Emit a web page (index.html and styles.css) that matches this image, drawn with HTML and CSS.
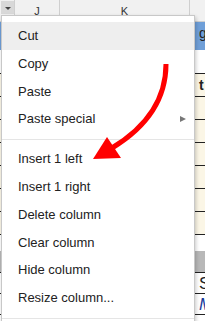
FILE: index.html
```html
<!DOCTYPE html>
<html>
<head>
<meta charset="utf-8">
<link rel="stylesheet" href="styles.css">
</head>
<body>
<div class="page">
  <div class="sheet">
    <div class="header">
      <div class="hc c0"><span class="dd"><span class="tri"></span></span></div>
      <div class="hc c1">J</div>
      <div class="hc c2">K</div>
      <div class="hc c3"></div>
    </div>
    <div class="row blue"><div class="lcell">g</div></div>
    <div class="row plain"></div>
    <div class="row lined"><div class="lcell bold">t</div></div>
    <div class="row lined"></div>
    <div class="row lined"></div>
    <div class="row lined"></div>
    <div class="row lined"></div>
    <div class="row lined"></div>
    <div class="row lined"></div>
    <div class="row short"></div>
    <div class="row gray"></div>
    <div class="row lined2"><div class="lcell big">S</div></div>
    <div class="row lined2"><div class="lcell big bluet">M</div></div>
    <div class="row lined2"><div class="lcell">-</div></div>
  </div>

  <div class="menu">
    <div class="item active">Cut</div>
    <div class="item">Copy</div>
    <div class="item">Paste</div>
    <div class="item sub">Paste special<span class="subarrow"></span></div>
    <div class="sep"></div>
    <div class="item">Insert 1 left</div>
    <div class="item">Insert 1 right</div>
    <div class="item">Delete column</div>
    <div class="item">Clear column</div>
    <div class="item">Hide column</div>
    <div class="item">Resize column...</div>
    <div class="sep"></div>
  </div>

  <svg class="arrow" width="205" height="321" viewBox="0 0 205 321">
    <path d="M166,64 C166,100 145,128 112,148" fill="none" stroke="#ff0000" stroke-width="5"/>
    <polygon points="93,159 107,137 121,158" fill="#ff0000"/>
  </svg>
</div>
</body>
</html>
```

FILE: styles.css
```css
html, body {
  margin: 0;
  padding: 0;
}
body {
  width: 205px;
  height: 321px;
  overflow: hidden;
  background: #ffffff;
  font-family: "Liberation Sans", Arial, sans-serif;
}
.page {
  position: relative;
  width: 205px;
  height: 321px;
  overflow: hidden;
}
.sheet {
  display: flex;
  flex-direction: column;
  width: 205px;
}
.header {
  display: flex;
  height: 21px;
  border-bottom: 1px solid #cfcfcf;
  background: #f1f1f1;
  color: #333;
  font-size: 11px;
}
.hc {
  box-sizing: border-box;
  display: flex;
  justify-content: center;
  padding-top: 5px;
  border-right: 1px solid #cfcfcf;
}
.c0 { width: 15px; padding-top: 1px; justify-content: flex-start; }
.c1 { width: 45px; }
.c2 { width: 130px; }
.c3 { flex: 1; border-right: none; }
.dd {
  box-sizing: border-box;
  width: 13px;
  height: 13px;
  margin-left: 1px;
  background: #d8d8d8;
  display: flex;
  align-items: center;
  justify-content: center;
}
.tri {
  width: 0;
  height: 0;
  border-left: 3px solid transparent;
  border-right: 3px solid transparent;
  border-top: 3px solid #444;
  margin-top: 1px;
}
.row {
  box-sizing: border-box;
  display: flex;
  justify-content: flex-start;
  background: #fbf6e6;
}
.blue { height: 28px; background: #6f9fd8; }
.plain { height: 24px; background: #ffffff; border-bottom: 1px solid #222; }
.lined { height: 23px; border-bottom: 1px solid #222; }
.short { height: 16px; background: #ffffff; }
.gray { height: 22px; background: #b8b8b8; border-bottom: 1px solid #222; }
.lined2 { height: 21px; border-bottom: 1px solid #222; background: #ffffff; }
.lcell {
  margin-left: 199px;
  font-size: 14px;
  line-height: 22px;
  color: #222;
}
.bold { font-weight: bold; }
.big { font-size: 17px; line-height: 21px; }
.bluet { color: #1a3a9a; font-style: italic; }

.menu {
  position: absolute;
  left: 1px;
  top: 15px;
  width: 192px;
  height: 340px;
  padding: 6px 0;
  background: #ffffff;
  border: 1px solid #c8c8c8;
  box-shadow: 1px 2px 4px rgba(0, 0, 0, 0.22);
  color: #222;
  font-size: 13px;
}
.item {
  display: flex;
  align-items: center;
  justify-content: space-between;
  height: 27.8px;
  line-height: 27.8px;
  padding: 0 8px 0 16px;
}
.item.active {
  background: #eeeeee;
}
.subarrow {
  width: 0;
  height: 0;
  border-top: 3.5px solid transparent;
  border-bottom: 3.5px solid transparent;
  border-left: 6px solid #777;
}
.sep {
  height: 0;
  border-top: 1px solid #e5e5e5;
  margin: 6px 0 5px;
}
.arrow {
  position: absolute;
  left: 0;
  top: 0;
}
```
